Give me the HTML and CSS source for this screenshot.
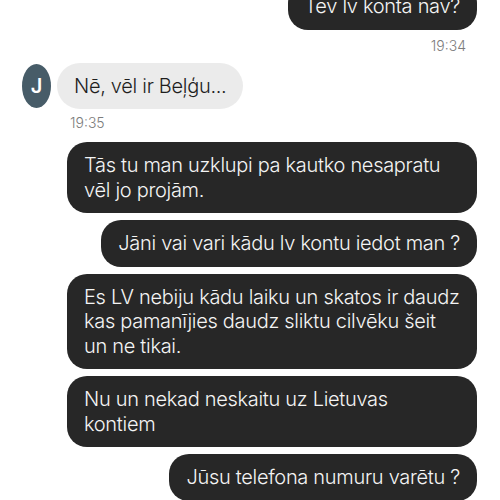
FILE: index.html
```html
<!DOCTYPE html>
<html lang="lv">
<head>
  <meta charset="UTF-8" />
  <title>Chat</title>
  <link rel="stylesheet" href="styles.css">
</head>
<body>
  <div class="chat">
    <div class="bubble out">Tev lv konta nav?</div>
    <div class="time out">19:34</div>

    <div class="row in">
      <div class="avatar">J</div>
      <div class="bubble in">Nē, vēl ir Beļģu...</div>
    </div>
    <div class="time in">19:35</div>

    <div class="group">
      <div class="bubble out">Tās tu man uzklupi pa kautko nesapratu vēl jo projām.</div>
      <div class="bubble out">Jāni vai vari kādu lv kontu iedot man ?</div>
      <div class="bubble out">Es LV nebiju kādu laiku un skatos ir daudz kas pamanījies daudz sliktu cilvēku šeit un ne tikai.</div>
      <div class="bubble out">Nu un nekad neskaitu uz Lietuvas kontiem</div>
      <div class="bubble out">Jūsu telefona numuru varētu ?</div>
    </div>
  </div>
</body>
</html>
```

FILE: styles.css
```css
body {
  margin: 0;
  background: #fff;
  font-family: Inter, "Noto Sans", sans-serif;
  overflow: hidden;
}
.chat {
  display: flex;
  flex-direction: column;
  margin-top: -17px;
  padding: 0 23px 0 22px;
}
.bubble {
  font-size: 20px;
  font-weight: 300;
  letter-spacing: -0.3px;
  line-height: 24.5px;
  padding: 11px 17px;
  border-radius: 20px;
  box-sizing: border-box;
  max-width: 410px;
}
.bubble.out {
  align-self: flex-end;
  background: #272727;
  color: #f4f4f4;
}
.bubble.in {
  background: #ebebeb;
  color: #1e1e1e;
  border-radius: 24px;
}
.time {
  font-size: 14px;
  font-weight: 300;
  line-height: 16px;
  color: #7c7c7c;
}
.time.out {
  align-self: flex-end;
  margin: 8px 11px 9px 0;
}
.time.in {
  margin: 6px 0 11px 48px;
}
.row {
  display: flex;
  align-items: center;
  gap: 6px;
}
.avatar {
  width: 29px;
  height: 44px;
  border-radius: 50%;
  background: #475c68;
  color: #fff;
  font-size: 20px;
  font-weight: 600;
  display: flex;
  align-items: center;
  justify-content: center;
}
.group {
  display: flex;
  flex-direction: column;
  gap: 7px;
}
```
